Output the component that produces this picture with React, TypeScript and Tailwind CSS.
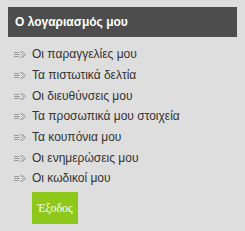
const items = [
  'Οι παραγγελίες μου',
  'Τα πιστωτικά δελτία',
  'Οι διευθύνσεις μου',
  'Τα προσωπικά μου στοιχεία',
  'Τα κουπόνια μου',
  'Οι ενημερώσεις μου',
  'Οι κωδικοί μου',
]

function Arrow() {
  return (
    <svg width="12" height="8" viewBox="0 0 12 8" className="shrink-0">
      <g stroke="#9a9a9a" strokeWidth="1" fill="none">
        <path d="M0 2.5h5M0 4.5h6M0 6.5h5" />
        <path d="M6 1l3.5 3.5L6 8" />
        <path d="M8 1l3.5 3.5L8 8" />
      </g>
    </svg>
  )
}

export default function App() {
  return (
    <div className="w-[245px] h-[231px] bg-[#dedede] pt-[7px] font-['Liberation_Sans',Arial,sans-serif]">
      <div className="mx-[8px] h-[30px] bg-[#4d4d4d] flex items-center px-[7px]">
        <h2 className="text-white text-[12px] font-bold">Ο λογαριασμός μου</h2>
      </div>
      <ul className="mt-[7px] pl-[14px]">
        {items.map((item) => (
          <li key={item} className="flex items-center gap-[6px] h-[20.7px]">
            <Arrow />
            <a href="#" className="text-[12px] text-[#333]">
              {item}
            </a>
          </li>
        ))}
      </ul>
      <button className="ml-[32px] mt-[3px] w-[46px] h-[32px] bg-[#8dc81a] text-white text-[12px] font-['Liberation_Serif',serif]">
        Έξοδος
      </button>
    </div>
  )
}
